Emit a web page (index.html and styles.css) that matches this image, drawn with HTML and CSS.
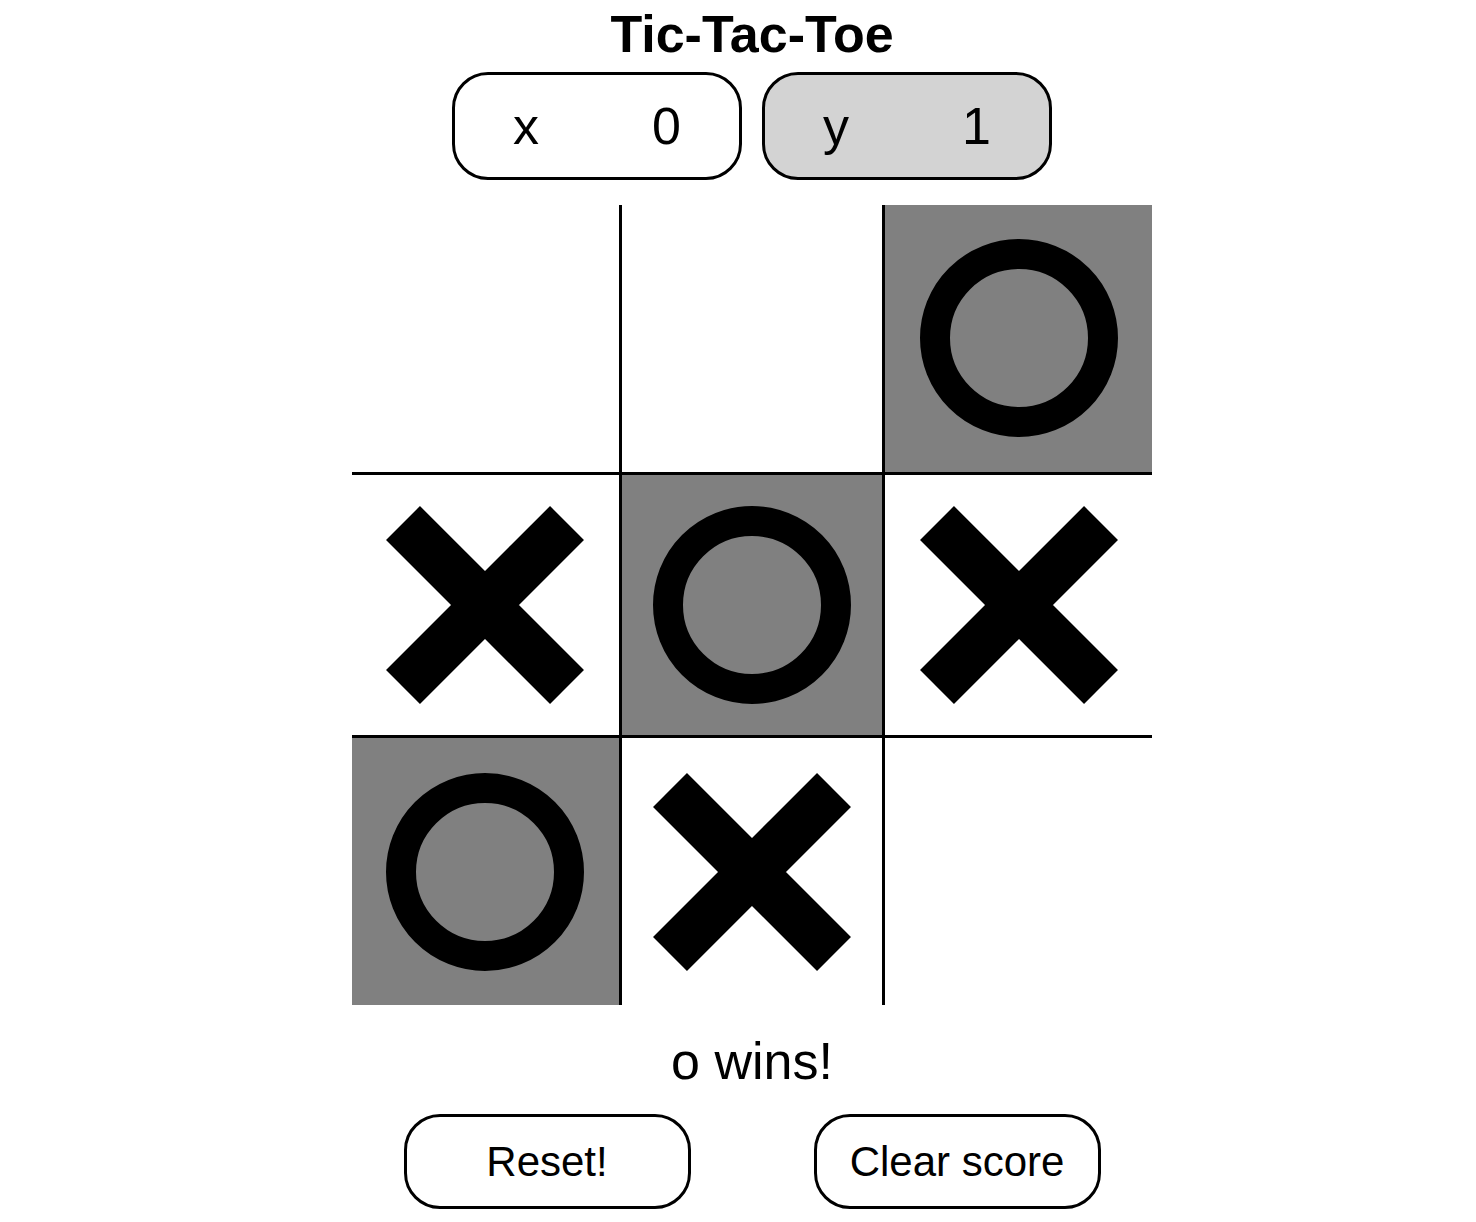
FILE: index.html
```html
<!DOCTYPE html>
<html lang="en">
<head>
    <meta charset="UTF-8">
    <meta name="viewport" content="width=device-width, initial-scale=1.0">
    <title>Tic-Tac-Toe</title>
    <link rel="stylesheet" href="styles.css">
</head>
  <body>
    <div class="game">
        <h1 class="title">Tic-Tac-Toe</h1>

        <!-- Score board -->
        <div class="scores">
            <div class="score">
                <span>x</span>
                <span>0</span>
            </div>
            <div class="score active">
                <span>y</span>
                <span>1</span>
            </div>
        </div>

        <!-- Board -->
        <div class="board">
            <div class="cell"></div>
            <div class="cell mid-col"></div>
            <div class="cell win">
                <svg class="mark" viewBox="0 0 198 198"><circle cx="99" cy="99" r="84" fill="none" stroke="#000" stroke-width="30"/></svg>
            </div>

            <div class="cell mid-row">
                <svg class="mark" viewBox="0 0 198 198"><path d="M17 17L181 181M181 17L17 181" stroke="#000" stroke-width="48"/></svg>
            </div>
            <div class="cell mid-row mid-col win">
                <svg class="mark" viewBox="0 0 198 198"><circle cx="99" cy="99" r="84" fill="none" stroke="#000" stroke-width="30"/></svg>
            </div>
            <div class="cell mid-row">
                <svg class="mark" viewBox="0 0 198 198"><path d="M17 17L181 181M181 17L17 181" stroke="#000" stroke-width="48"/></svg>
            </div>

            <div class="cell win">
                <svg class="mark" viewBox="0 0 198 198"><circle cx="99" cy="99" r="84" fill="none" stroke="#000" stroke-width="30"/></svg>
            </div>
            <div class="cell mid-col">
                <svg class="mark" viewBox="0 0 198 198"><path d="M17 17L181 181M181 17L17 181" stroke="#000" stroke-width="48"/></svg>
            </div>
            <div class="cell"></div>
        </div>

        <div class="status">o wins!</div>

        <div class="actions">
            <button type="button">Reset!</button>
            <button type="button">Clear score</button>
        </div>
    </div>
  </body>
</html>
```

FILE: styles.css
```css
body {
    font-family: "Liberation Sans", Arial, sans-serif;
    margin: 0;
    padding: 4px 0 0 28px;
    background-color: white;
    color: black;
}

.game {
    display: flex;
    flex-direction: column;
    align-items: center;
}

.title {
    margin: 0;
    font-size: 52px;
    line-height: 60px;
    font-weight: bold;
}

/* Score boxes */
.scores {
    display: flex;
    gap: 20px;
    margin-top: 8px;
}

.score {
    width: 290px;
    height: 108px;
    box-sizing: border-box;
    border: 3px solid black;
    border-radius: 36px;
    padding: 0 58px;
    display: flex;
    justify-content: space-between;
    align-items: center;
    font-size: 52px;
}

.score.active {
    background-color: lightgray;
}

/* Board */
.board {
    margin-top: 25px;
    width: 800px;
    height: 800px;
    display: grid;
    grid-template-columns: repeat(3, 1fr);
    grid-template-rows: repeat(3, 1fr);
}

.cell {
    box-sizing: border-box;
    display: flex;
    align-items: center;
    justify-content: center;
}

.cell.mid-col {
    border-left: 3px solid black;
    border-right: 3px solid black;
}

.cell.mid-row {
    border-top: 3px solid black;
    border-bottom: 3px solid black;
}

.cell.win {
    background-color: gray;
}

.mark {
    width: 198px;
    height: 198px;
    display: block;
}

.status {
    margin-top: 26px;
    font-size: 52px;
    line-height: 60px;
}

/* Buttons */
.actions {
    display: flex;
    gap: 123px;
    margin-top: 23px;
}

button {
    width: 287px;
    height: 95px;
    box-sizing: border-box;
    border: 3px solid black;
    border-radius: 36px;
    background-color: white;
    color: black;
    font-family: inherit;
    font-size: 42px;
    padding: 0;
    cursor: pointer;
}
```
